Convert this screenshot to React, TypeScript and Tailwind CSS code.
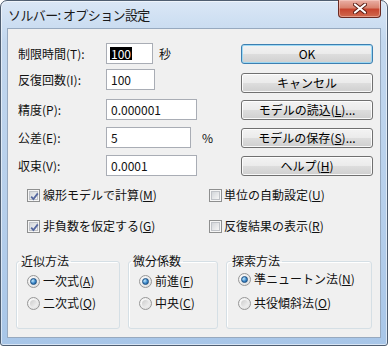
import React from 'react'
import clsx from 'clsx'

const jp = "font-['Noto_Sans_CJK_JP',sans-serif]"

interface IFieldProps {
    label: string
    value: string
    width: string
    top: string
    suffix?: string
    suffixGap?: string
    selected?: boolean
}

const fields: IFieldProps[] = [
    { label: '制限時間(T):', value: '100', width: 'w-[47px]', top: 'mt-0', suffix: '秒', suffixGap: 'ml-[6px]', selected: true },
    { label: '反復回数(I):', value: '100', width: 'w-[49px]', top: 'mt-[5px]' },
    { label: '精度(P):', value: '0.000001', width: 'w-[91px]', top: 'mt-[9px]' },
    { label: '公差(E):', value: '5', width: 'w-[85px]', top: 'mt-[7px]', suffix: '%', suffixGap: 'ml-[11px]' },
    { label: '収束(V):', value: '0.0001', width: 'w-[91px]', top: 'mt-[7px]' },
]

// Text with an underlined access key, e.g. "モデルの読込(L)..."
const AccessText = ({ before, keyChar, after }: { before: string; keyChar: string; after: string }) => {
    return (
        <span className="whitespace-nowrap">
            {before}(<span className="underline decoration-1 underline-offset-[1px]">{keyChar}</span>){after}
        </span>
    )
}

const CloseButton = () => {
    return (
        <div className="-mt-px flex h-[18px] w-[43px] items-center justify-center rounded-b-[4px] border border-t-0 border-[#6b2a22] bg-[linear-gradient(to_bottom,#eab0a6_0%,#d9836f_45%,#c7452f_55%,#d06a4f_100%)] shadow-[inset_0_0_0_1px_rgba(255,220,210,0.45)]">
            <svg width="14" height="11" viewBox="0 0 14 11">
                <path d="M2 1.5 L12 9.5 M12 1.5 L2 9.5" stroke="#5b1d15" strokeWidth="4" strokeLinecap="round" />
                <path d="M2 1.5 L12 9.5 M12 1.5 L2 9.5" stroke="#ffffff" strokeWidth="2.2" strokeLinecap="round" />
            </svg>
        </div>
    )
}

const VistaButton = ({ children, isDefault, top }: { children: React.ReactNode; isDefault?: boolean; top: string }) => {
    return (
        <div
            className={clsx(
                'flex h-[20px] w-[132px] items-center justify-center rounded-[3px] border bg-[linear-gradient(to_bottom,#f3f3f3_0%,#ebebeb_48%,#dddddd_52%,#cfcfcf_100%)] text-[12px] leading-none text-black',
                isDefault
                    ? 'border-[#3c7fb1] shadow-[inset_0_0_0_1px_rgba(150,215,245,0.9)]'
                    : 'border-[#707070] shadow-[inset_0_0_0_1px_rgba(255,255,255,0.85)]',
                top
            )}
        >
            {children}
        </div>
    )
}

const CheckBox = ({ checked }: { checked: boolean }) => {
    return (
        <span className="relative flex h-[13px] w-[13px] shrink-0 items-center justify-center border border-[#8e8f8f] bg-[#f6f6f6]">
            <span className="h-[9px] w-[9px] border border-[#c0c3c8] bg-[linear-gradient(135deg,#d3d6da,#f6f6f6)]" />
            {checked && (
                <svg className="absolute left-[1px] top-[1px]" width="11" height="11" viewBox="0 0 11 11">
                    <path d="M2.2 5.6 L4.4 8 L8.8 2.4" fill="none" stroke="#56689f" strokeWidth="1.8" />
                </svg>
            )}
        </span>
    )
}

const Radio = ({ checked }: { checked: boolean }) => {
    return (
        <span className="flex h-[13px] w-[13px] shrink-0 items-center justify-center rounded-full border border-[#979797] bg-[radial-gradient(circle_at_35%_35%,#ffffff,#dadada)]">
            {checked ? (
                <span className="h-[7px] w-[7px] rounded-full border border-[#1d4f80] bg-[radial-gradient(circle_at_35%_35%,#c4ebff,#3a86c8_55%,#1b5a95)]" />
            ) : (
                <span className="h-[7px] w-[7px] rounded-full bg-[linear-gradient(135deg,#cdcdcd,#f3f3f3)]" />
            )}
        </span>
    )
}

interface IGroupProps {
    title: string
    width: string
    pad: string
    firstTop: string
    secondTop: string
    items: { before: string; keyChar: string; checked: boolean }[]
}

const groups: IGroupProps[] = [
    {
        title: '近似方法',
        width: 'w-[104px]',
        pad: 'pl-[10px]',
        firstTop: 'mt-[5px]',
        secondTop: 'mt-[6px]',
        items: [
            { before: '一次式', keyChar: 'A', checked: true },
            { before: '二次式', keyChar: 'Q', checked: false },
        ],
    },
    {
        title: '微分係数',
        width: 'w-[90px]',
        pad: 'pl-[10px]',
        firstTop: 'mt-[5px]',
        secondTop: 'mt-[6px]',
        items: [
            { before: '前進', keyChar: 'F', checked: true },
            { before: '中央', keyChar: 'C', checked: false },
        ],
    },
    {
        title: '探索方法',
        width: 'w-[146px]',
        pad: 'pl-[11px]',
        firstTop: 'mt-[3px]',
        secondTop: 'mt-[8px]',
        items: [
            { before: '準ニュートン法', keyChar: 'N', checked: true },
            { before: '共役傾斜法', keyChar: 'O', checked: false },
        ],
    },
]

const GroupBox = ({ title, width, pad, firstTop, secondTop, items }: IGroupProps) => {
    return (
        <fieldset
            className={clsx(
                'rounded-[3px] border border-[#d5dfe5] pb-[17px] shadow-[inset_1px_1px_0_#ffffff]',
                width,
                pad
            )}
        >
            <legend className="ml-[-8px] px-[2px] text-[12px] leading-[14px]">{title}</legend>
            {items.map((item, i) => (
                <div key={item.keyChar} className={clsx('flex h-[16px] items-center gap-[3px]', i === 0 ? firstTop : secondTop)}>
                    <Radio checked={item.checked} />
                    <AccessText before={item.before} keyChar={item.keyChar} after="" />
                </div>
            ))}
        </fieldset>
    )
}

export default function App() {
    return (
        <div className={clsx('h-[346px] w-[388px] overflow-hidden bg-white text-black', jp)}>
            <div className="flex h-full w-full flex-col rounded-t-[7px] rounded-b-[3px] border border-[#4f5e71] bg-[linear-gradient(to_bottom,#dae7f6_0%,#c2d7ee_12%,#b6cfeb_60%,#a8c6e8_100%)] px-[6px] pb-[7px] shadow-[inset_0_0_0_1px_rgba(255,255,255,0.55)]">
                {/* Title bar */}
                <div className="flex h-[27px] shrink-0 items-start justify-between">
                    <span className="ml-[1px] mt-[7px] text-[13px] leading-[13px] tracking-[-0.6px] text-[#1a1a1a]">
                        ソルバー: オプション設定
                    </span>
                    <CloseButton />
                </div>

                {/* Client area */}
                <div className="flex flex-1 flex-col border border-[#97a9bf] bg-[#f0f0f0] text-[12px] leading-none text-[#111]">
                    <div className="flex pl-[10px] pt-[14px]">
                        {/* Fields */}
                        <div className="flex flex-col">
                            {fields.map((f) => (
                                <div key={f.label} className={clsx('flex h-[21px] items-center', f.top)}>
                                    <span className="w-[88px] whitespace-nowrap">{f.label}</span>
                                    <div
                                        className={clsx(
                                            'flex h-[21px] items-center border border-[#a9adb5] bg-white pl-[3px]',
                                            f.width
                                        )}
                                    >
                                        {f.selected ? (
                                            <span className="flex h-[13px] items-center bg-black pl-[1px] pr-[1px] text-white">{f.value}</span>
                                        ) : (
                                            <span className="pl-[1px]">{f.value}</span>
                                        )}
                                    </div>
                                    {f.suffix && <span className={f.suffixGap}>{f.suffix}</span>}
                                </div>
                            ))}
                        </div>

                        {/* Buttons */}
                        <div className="ml-auto mr-[7px] flex flex-col pt-[1px]">
                            <VistaButton isDefault top="mt-0">
                                OK
                            </VistaButton>
                            <VistaButton top="mt-[9px]">キャンセル</VistaButton>
                            <VistaButton top="mt-[7px]">
                                <AccessText before="モデルの読込" keyChar="L" after="..." />
                            </VistaButton>
                            <VistaButton top="mt-[8px]">
                                <AccessText before="モデルの保存" keyChar="S" after="..." />
                            </VistaButton>
                            <VistaButton top="mt-[8px]">
                                <AccessText before="ヘルプ" keyChar="H" after="" />
                            </VistaButton>
                        </div>
                    </div>

                    {/* Check boxes */}
                    <div className="mt-[11px] grid grid-cols-[182px_1fr] gap-y-[15px] pl-[19px]">
                        <div className="flex h-[16px] items-center gap-[3px]">
                            <CheckBox checked />
                            <AccessText before="線形モデルで計算" keyChar="M" after="" />
                        </div>
                        <div className="flex h-[16px] items-center gap-[2px]">
                            <CheckBox checked={false} />
                            <AccessText before="単位の自動設定" keyChar="U" after="" />
                        </div>
                        <div className="flex h-[16px] items-center gap-[3px]">
                            <CheckBox checked />
                            <AccessText before="非負数を仮定する" keyChar="G" after="" />
                        </div>
                        <div className="flex h-[16px] items-center gap-[2px]">
                            <CheckBox checked={false} />
                            <AccessText before="反復結果の表示" keyChar="R" after="" />
                        </div>
                    </div>

                    {/* Group boxes */}
                    <div className="mt-[20px] flex gap-[8px] pl-[8px]">
                        {groups.map((g) => (
                            <GroupBox key={g.title} {...g} />
                        ))}
                    </div>
                </div>
            </div>
        </div>
    )
}
